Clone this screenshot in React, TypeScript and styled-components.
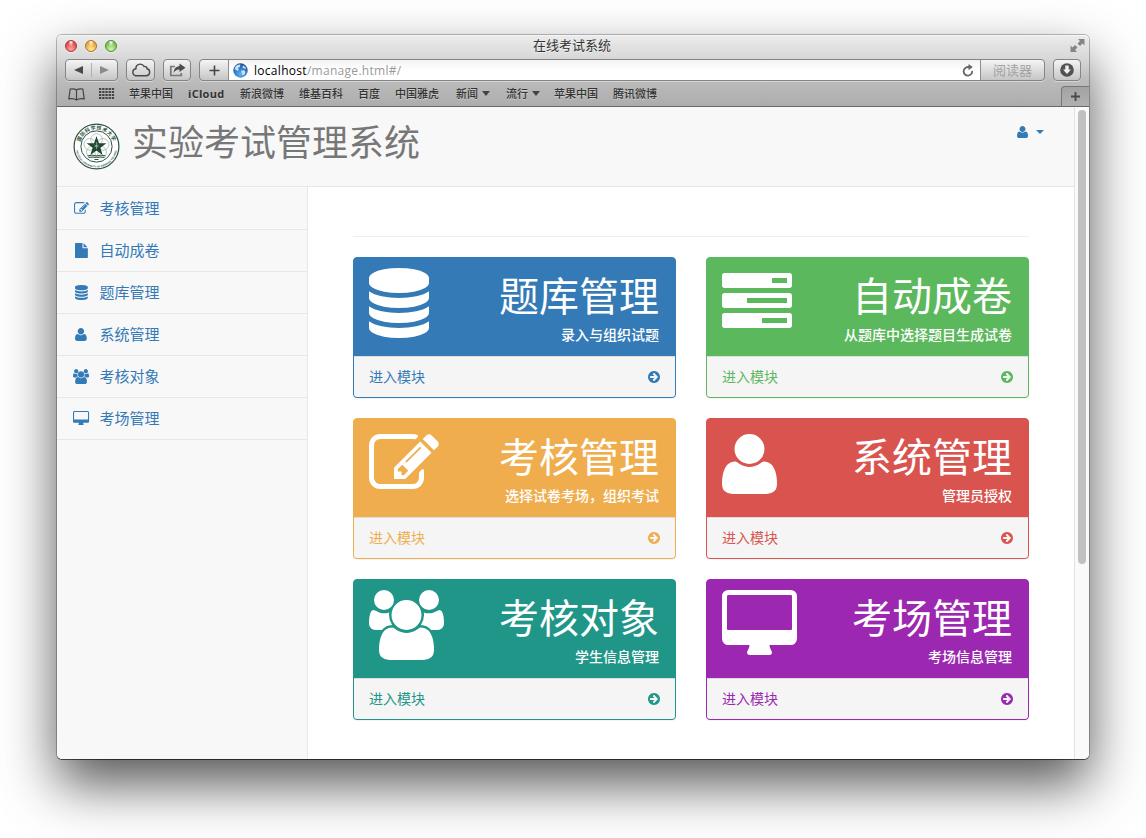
import React from 'react';
import styled, { createGlobalStyle } from 'styled-components';

const CJK = '"Noto Sans CJK SC", sans-serif';

const GlobalStyle = createGlobalStyle`
  * { box-sizing: border-box; }
  body {
    margin: 0;
    background: #fff;
    font-family: "Liberation Sans", ${CJK};
    font-size: 14px;
    line-height: 20px;
    overflow: hidden;
  }
`;

/* ---------- icons (1792 units per em, y axis pointing up) ---------- */

type Glyph = { w: number; d: string };

const glyphs: Record<string, Glyph> = {
  database: {
    w: 1536,
    d: 'M768 768q237 0 443 43t325 127v-170q0-69-103-128t-280-93.5t-385-34.5t-385 34.5t-280 93.5t-103 128v170q119-84 325-127t443-43zM768 0q237 0 443 43t325 127v-170q0-69-103-128t-280-93.5t-385-34.5t-385 34.5t-280 93.5t-103 128v170q119-84 325-127t443-43zM768 384q237 0 443 43t325 127v-170q0-69-103-128t-280-93.5t-385-34.5t-385 34.5t-280 93.5t-103 128v170q119-84 325-127t443-43zM768 1536q208 0 385-34.5t280-93.5t103-128v-128q0-69-103-128t-280-93.5t-385-34.5t-385 34.5t-280 93.5t-103 128v128q0 69 103 128t280 93.5t385 34.5z',
  },
  tasks: {
    w: 1792,
    d: 'M1024 128h640v128h-640v-128zM640 640h1024v128h-1024v-128zM1280 1152h384v128h-384v-128zM1792 320v-256q0-26-19-45t-45-19h-1664q-26 0-45 19t-19 45v256q0 26 19 45t45 19h1664q26 0 45-19t19-45zM1792 832v-256q0-26-19-45t-45-19h-1664q-26 0-45 19t-19 45v256q0 26 19 45t45 19h1664q26 0 45-19t19-45zM1792 1344v-256q0-26-19-45t-45-19h-1664q-26 0-45 19t-19 45v256q0 26 19 45t45 19h1664q26 0 45-19t19-45z',
  },
  edit: {
    w: 1792,
    d: 'M888 352l116 116l-152 152l-116-116v-56h96v-96h56zM1328 1072q-16 16-33-1l-350-350q-17-17-1-33t33 1l350 350q17 17 1 33zM1408 478v-190q0-119-84.5-203.5t-203.5-84.5h-832q-119 0-203.5 84.5t-84.5 203.5v832q0 119 84.5 203.5t203.5 84.5h832q63 0 117-25q15-7 18-23q3-17-9-29l-49-49q-14-14-32-8q-23 6-45 6h-832q-66 0-113-47t-47-113v-832q0-66 47-113t113-47h832q66 0 113 47t47 113v126q0 13 9 22l64 64q15 15 35 7t20-29zM1312 1216l288-288l-672-672h-288v288zM1756 1084l-92-92l-288 288l92 92q28 28 68 28t68-28l152-152q28-28 28-68t-28-68z',
  },
  user: {
    w: 1408,
    d: 'M1408 131q0-120-73-189.5t-194-69.5h-874q-121 0-194 69.5t-73 189.5q0 53 3.5 103.5t14 109t26.5 108.5t43 97.5t62 81t85.5 53.5t111.5 20q9 0 42-21.5t74.5-48t108-48t133.5-21.5t133.5 21.5t108 48t74.5 48t42 21.5q61 0 111.5-20t85.5-53.5t62-81t43-97.5t26.5-108.5t14-109t3.5-103.5zM1088 1024q0-159-112.5-271.5t-271.5-112.5t-271.5 112.5t-112.5 271.5t112.5 271.5t271.5 112.5t271.5-112.5t112.5-271.5z',
  },
  users: {
    w: 1920,
    d: 'M593 640q-162-5-265-128h-134q-82 0-138 40.5t-56 118.5q0 353 124 353q6 0 43.5-21t97.5-42.5t119-21.5q67 0 133 23q-5-37-5-66q0-139 81-256zM1664 3q0-120-73-189.5t-194-69.5h-874q-121 0-194 69.5t-73 189.5q0 53 3.5 103.5t14 109t26.5 108.5t43 97.5t62 81t85.5 53.5t111.5 20q10 0 43-21.5t73-48t107-48t135-21.5t135 21.5t107 48t73 48t43 21.5q61 0 111.5-20t85.5-53.5t62-81t43-97.5t26.5-108.5t14-109t3.5-103.5zM640 1280q0-106-75-181t-181-75t-181 75t-75 181t75 181t181 75t181-75t75-181zM1344 896q0-159-112.5-271.5t-271.5-112.5t-271.5 112.5t-112.5 271.5t112.5 271.5t271.5 112.5t271.5-112.5t112.5-271.5zM1920 671q0-78-56-118.5t-138-40.5h-134q-103 123-265 128q81 117 81 256q0 29-5 66q66-23 133-23q59 0 119 21.5t97.5 42.5t43.5 21q124 0 124-353zM1792 1280q0-106-75-181t-181-75t-181 75t-75 181t75 181t181 75t181-75t75-181z',
  },
  desktop: {
    w: 1920,
    d: 'M1792 544v832q0 13-9.5 22.5t-22.5 9.5h-1600q-13 0-22.5-9.5t-9.5-22.5v-832q0-13 9.5-22.5t22.5-9.5h1600q13 0 22.5 9.5t9.5 22.5zM1920 1376v-1088q0-66-47-113t-113-47h-544q0-37 16-77.5t32-71t16-43.5q0-26-19-45t-45-19h-512q-26 0-45 19t-19 45q0 14 16 44t32 70t16 78h-544q-66 0-113 47t-47 113v1088q0 66 47 113t113 47h1600q66 0 113-47t47-113z',
  },
  file: {
    w: 1536,
    d: 'M1024 1024v472q22-14 36-28l408-408q14-14 28-36h-472zM896 992q0-40 28-68t68-28h544v-1056q0-40-28-68t-68-28h-1344q-40 0-68 28t-28 68v1600q0 40 28 68t68 28h800v-544z',
  },
  arrow: {
    w: 1536,
    d: 'M1285 640q0 27-18 45l-91 91l-362 362q-18 18-45 18t-45-18l-91-91q-18-18-18-45t18-45l189-189h-502q-26 0-45-19t-19-45v-128q0-26 19-45t45-19h502l-189-189q-19-19-19-45t19-45l91-91q18-18 45-18t45 18l362 362l91 91q18 18 18 45zM1536 640q0-209-103-385.5t-279.5-279.5t-385.5-103t-385.5 103t-279.5 279.5t-103 385.5t103 385.5t279.5 279.5t385.5 103t385.5-103t279.5-279.5t103-385.5z',
  },
};

const Svg = styled.svg`
  display: block;
  flex: none;
  overflow: visible;
`;

const Icon = ({ name, size }: { name: string; size: number }) => {
  const g = glyphs[name];
  return (
    <Svg width={(g.w / 1792) * size} height={size} viewBox={`0 -1536 ${g.w} 1792`}>
      <path transform="scale(1 -1)" fill="currentColor" fillRule="evenodd" d={g.d} />
    </Svg>
  );
};

/* ---------- browser window ---------- */

const Desktop = styled.div`
  width: 1146px;
  height: 838px;
  padding: 35px 57px 79px 57px;
  overflow: hidden;
`;

const Window = styled.div`
  width: 1032px;
  height: 724px;
  border-radius: 5px;
  display: flex;
  flex-direction: column;
  background: #fff;
  box-shadow: 0 0 0 1px rgba(0, 0, 0, 0.25), 0 1px 0 0 rgba(0, 0, 0, 0.5), 0 25px 54px rgba(0, 0, 0, 0.67);
`;

const Chrome = styled.div`
  height: 72px;
  flex: none;
  border-radius: 5px 5px 0 0;
  border-bottom: 1px solid #686868;
  background: linear-gradient(#ececec 0, #d9d9d9 22px, #bbb 46px, #adadad 71px);
  box-shadow: inset 0 1px 0 #f6f6f6;
  font-family: "Open Sans", ${CJK};
  color: #333;
`;

const TitleBar = styled.div`
  height: 24px;
  display: grid;
  grid-template-columns: 80px 1fr 80px;
  align-items: center;
  padding: 0 4px 2px 8px;
`;

const Lights = styled.div`
  display: flex;
  gap: 8px;
`;

const Light = styled.span<{ $edge: string; $mid: string; $glow: string }>`
  width: 12px;
  height: 12px;
  border-radius: 50%;
  border: 1px solid ${(p) => p.$edge};
  background: radial-gradient(ellipse at 50% 10%, #fff 0, rgba(255, 255, 255, 0) 38%),
    radial-gradient(circle at 50% 85%, ${(p) => p.$glow} 0, ${(p) => p.$mid} 70%);
  box-shadow: 0 1px 0 rgba(255, 255, 255, 0.5);
`;

const WindowTitle = styled.div`
  text-align: center;
  padding: 0 6px 1px 0;
  font-size: 13px;
  line-height: 19px;
  color: #333;
  text-shadow: 0 1px 0 rgba(255, 255, 255, 0.5);
`;

const Expand = styled.div`
  display: flex;
  justify-content: flex-end;
`;

const Toolbar = styled.div`
  height: 23px;
  display: flex;
  gap: 8px;
  padding: 0 8px;
`;

const ToolButton = styled.div<{ $w: number }>`
  width: ${(p) => p.$w}px;
  height: 22px;
  display: flex;
  align-items: center;
  justify-content: center;
  border: 1px solid #858585;
  border-radius: 4px;
  background: linear-gradient(#f4f4f4, #c6c6c6);
  box-shadow: 0 1px 0 rgba(255, 255, 255, 0.4);
`;

const NavHalf = styled.span<{ $divided?: boolean }>`
  flex: 1;
  height: 14px;
  display: flex;
  align-items: center;
  justify-content: center;
  border-right: ${(p) => (p.$divided ? '1px solid #b0b0b0' : '0')};
`;

const AddressGroup = styled.div`
  flex: 1;
  height: 22px;
  display: flex;
  border: 1px solid #858585;
  border-radius: 4px;
  overflow: hidden;
  background: linear-gradient(#f4f4f4, #c6c6c6);
  box-shadow: 0 1px 0 rgba(255, 255, 255, 0.4);
`;

const GroupButton = styled.div<{ $w: number }>`
  width: ${(p) => p.$w}px;
  display: flex;
  align-items: center;
  justify-content: center;
  font-size: 13px;
  color: #a3a3a3;
`;

const Address = styled.div`
  flex: 1;
  display: flex;
  align-items: center;
  padding: 0 6px 0 4px;
  border: solid #8d8d8d;
  border-width: 0 1px;
  background: linear-gradient(#f3f3f3, #fff 50%);
`;

const Url = styled.div`
  flex: 1;
  margin-left: 6px;
  padding-top: 2px;
  font-family: "Open Sans", sans-serif;
  font-size: 12px;
  letter-spacing: 0.29px;
  line-height: 20px;
  color: #9a9a9a;
`;

const Host = styled.span`
  color: #000;
`;

const Bookmarks = styled.div`
  height: 24px;
  display: flex;
  align-items: center;
  padding: 0 0 0 11px;
  font-size: 11px;
  font-weight: 500;
  line-height: 20px;
  color: #333;
  text-shadow: 0 1px 0 rgba(255, 255, 255, 0.35);
`;

const BookmarkIcons = styled.div`
  width: 61px;
  display: flex;
  align-items: center;
  gap: 14px;
`;

const Bookmark = styled.span<{ $after?: number; $bold?: boolean }>`
  display: flex;
  align-items: center;
  gap: 4px;
  white-space: nowrap;
  min-width: ${(p) => (p.$bold ? '37px' : '0')};
  margin-right: ${(p) => p.$after ?? 15}px;
  letter-spacing: ${(p) => (p.$bold ? '0.3px' : '0')};
  font-weight: ${(p) => (p.$bold ? 700 : 500)};
`;

const Caret = styled.span<{ $s: number }>`
  border: ${(p) => p.$s}px solid transparent;
  border-top-color: currentColor;
  border-bottom-width: 0;
`;

const MenuMark = styled.span`
  margin-top: -2px;
  border: solid transparent;
  border-width: 5px 4px 0 4px;
  border-top-color: #444;
`;

const NewTab = styled.div`
  margin-left: auto;
  align-self: flex-end;
  width: 28px;
  height: 20px;
  display: flex;
  align-items: center;
  justify-content: center;
  border: solid #777;
  border-width: 1px 0 0 1px;
  border-radius: 4px 0 0 0;
  background: linear-gradient(#a3a3a3, #b0b0b0);
`;

/* ---------- page ---------- */

const Viewport = styled.div`
  flex: 1;
  display: flex;
  border-radius: 0 0 5px 5px;
  overflow: hidden;
`;

const Page = styled.div`
  flex: 1;
  display: flex;
  flex-direction: column;
`;

const ScrollTrack = styled.div`
  width: 15px;
  padding: 3px 3px 0 3px;
  border-left: 1px solid #e3e3e3;
  background: #fafafa;
`;

const ScrollThumb = styled.div`
  width: 8px;
  height: 454px;
  border-radius: 4px;
  background: #c1c1c1;
`;

const Header = styled.header`
  height: 80px;
  display: flex;
  padding: 16px 30px 0 16px;
  background: #f8f8f8;
  border-bottom: 1px solid #e7e7e7;
`;

const Brand = styled.h1`
  flex: 1;
  margin: -9px 0 0 11px;
  font: 400 36px/52px ${CJK};
  color: #777;
`;

const Account = styled.div`
  display: flex;
  gap: 8px;
  height: 18px;
  align-items: center;
  color: #337ab7;
`;

const Body = styled.div`
  flex: 1;
  display: flex;
`;

const Sidebar = styled.nav`
  width: 251px;
  padding-top: 1px;
  background: #f8f8f8;
  border-right: 1px solid #e7e7e7;
`;

const NavItem = styled.a`
  display: flex;
  align-items: center;
  gap: 8.5px;
  height: 42px;
  padding-left: 14px;
  border-bottom: 1px solid #e7e7e7;
  font: 400 15px/20px ${CJK};
  color: #337ab7;
`;

const NavLabel = styled.span`
  padding-bottom: 2px;
`;

const FixedIcon = styled.span`
  width: 20px;
  display: flex;
  justify-content: center;
`;

const Content = styled.main`
  flex: 1;
  padding: 49px 45px 0 45px;
`;

const Grid = styled.div`
  display: grid;
  grid-template-columns: 1fr 1fr;
  gap: 20px 30px;
  padding-top: 20px;
  border-top: 1px solid #eee;
`;

const Panel = styled.section<{ $color: string }>`
  height: 141px;
  border: 1px solid ${(p) => p.$color};
  border-radius: 4px;
  overflow: hidden;
  background: ${(p) => p.$color};
  color: ${(p) => p.$color};
  box-shadow: 0 1px 1px rgba(0, 0, 0, 0.05);
`;

const PanelHeading = styled.div`
  height: 98px;
  display: flex;
  justify-content: space-between;
  padding: 10px 16px 10px 15px;
  color: #fff;
`;

const PanelText = styled.div`
  text-align: right;
  font-family: ${CJK};
`;

const PanelTitle = styled.div`
  height: 56px;
  font-size: 40px;
  line-height: 52px;
`;

const PanelNote = styled.div`
  font-size: 14px;
  font-weight: 500;
  line-height: 20px;
`;

const PanelFooter = styled.a`
  display: flex;
  align-items: center;
  justify-content: space-between;
  height: 41px;
  padding: 0 15px;
  border-top: 1px solid #ddd;
  background: #f5f5f5;
  font: 400 14px/20px ${CJK};
`;

const FooterLabel = styled.span`
  padding-bottom: 2px;
`;

const navItems = [
  { icon: 'edit', label: '考核管理' },
  { icon: 'file', label: '自动成卷' },
  { icon: 'database', label: '题库管理' },
  { icon: 'user', label: '系统管理' },
  { icon: 'users', label: '考核对象' },
  { icon: 'desktop', label: '考场管理' },
];

const panels = [
  { icon: 'database', color: '#337ab7', title: '题库管理', note: '录入与组织试题' },
  { icon: 'tasks', color: '#5cb85c', title: '自动成卷', note: '从题库中选择题目生成试卷' },
  { icon: 'edit', color: '#f0ad4e', title: '考核管理', note: '选择试卷考场，组织考试' },
  { icon: 'user', color: '#d9534f', title: '系统管理', note: '管理员授权' },
  { icon: 'users', color: '#209688', title: '考核对象', note: '学生信息管理' },
  { icon: 'desktop', color: '#9c27b0', title: '考场管理', note: '考场信息管理' },
];

const bookmarks: { label: string; after?: number; menu?: boolean; bold?: boolean }[] = [
  { label: '苹果中国' },
  { label: 'iCloud', bold: true },
  { label: '新浪微博' },
  { label: '维基百科' },
  { label: '百度' },
  { label: '中国雅虎', after: 17 },
  { label: '新闻', menu: true, after: 16 },
  { label: '流行', menu: true, after: 14 },
  { label: '苹果中国' },
  { label: '腾讯微博' },
];

const Seal = () => (
  <Svg width="48" height="48" viewBox="0.5 0.5 48 48">
    <defs>
      <path id="seal-top" d="M7.500 20A17 17 0 0 1 40.500 20" />
      <path id="seal-bottom" d="M3.700 28A20.600 20.600 0 0 0 44.300 28" />
    </defs>
    <circle cx="24" cy="24" r="22.4" fill="#fff" stroke="#2c5340" strokeWidth="1.2" />
    <circle cx="24" cy="24" r="15.6" fill="#fff" stroke="#2c5340" strokeWidth="1" />
    <g fill="none" stroke="#9fb3a7" strokeWidth="0.7">
      {[0, 72, 144, 216, 288].map((a) => (
        <circle key={a} cx="24" cy="17" r="5.8" transform={`rotate(${a} 24 24)`} />
      ))}
    </g>
    <path
      d="M24 13.6L26.4 20.7L33.9 20.8L27.9 25.3L30.1 32.4L24 28.1L17.9 32.4L20.1 25.3L14.1 20.8L21.6 20.7Z"
      fill="#1f4731"
    />
    <path d="M24 19.5v7M22 22.5l4 2M26 22.5l-4 2" stroke="#b8c8be" strokeWidth="0.6" />
    <path d="M15 33.4q4.500-1.500 9 0q4.500-1.500 9 0M16 35q4-1.200 8 0q4-1.200 8 0" fill="none" stroke="#2c5340" strokeWidth="1" />
    <path d="M22 37h4" stroke="#2c5340" strokeWidth="1" />
    <text fontFamily="Noto Sans CJK SC" fontSize="5" fontWeight="700" fill="#2c5340" letterSpacing="0.45">
      <textPath href="#seal-top" startOffset="0.5">国防科学技术大学</textPath>
    </text>
    <text fontFamily="Liberation Sans" fontSize="2.5" fontWeight="700" fill="#2c5340">
      <textPath href="#seal-bottom" startOffset="0">NATIONAL UNIVERSITY OF DEFENSE TECHNOLOGY</textPath>
    </text>
  </Svg>
);

const BrowserChrome = () => (
  <Chrome>
    <TitleBar>
      <Lights>
        <Light $edge="#a5393a" $mid="#e2474b" $glow="#ffa6a0" />
        <Light $edge="#a8732c" $mid="#eda33b" $glow="#ffec9a" />
        <Light $edge="#4f8a36" $mid="#78bf56" $glow="#d3f7a5" />
      </Lights>
      <WindowTitle>在线考试系统</WindowTitle>
      <Expand>
        <Svg width="15" height="15" viewBox="0 1 15 15" fill="#858585">
          <path d="M8 1h6.500v6.500l-2-2l-2.500 2.500l-2.500-2.500l2.500-2.500z" />
          <path d="M7 14H.5V7.500l2 2L5 7l2.500 2.500L5 12z" />
        </Svg>
      </Expand>
    </TitleBar>
    <Toolbar>
      <ToolButton $w={53}>
        <NavHalf $divided>
          <Svg width="9" height="8" viewBox="0 0 9 8"><path d="M0 4L9 0v8z" fill="#4a4a4a" /></Svg>
        </NavHalf>
        <NavHalf>
          <Svg width="9" height="8" viewBox="0 0 9 8"><path d="M9 4L0 0v8z" fill="#8b8b8b" /></Svg>
        </NavHalf>
      </ToolButton>
      <ToolButton $w={29}>
        <Svg width="20" height="14" viewBox="0 0 20 14">
          <path
            d="M4.600 12.700h10.600a3.500 3.500 0 0 0 .8-6.900a2.300 2.300 0 0 0-3-2.300a4.300 4.300 0 0 0-8.100 2.300a3.500 3.500 0 0 0-.3 6.900z"
            fill="none"
            stroke="#484848"
            strokeWidth="1.400"
          />
        </Svg>
      </ToolButton>
      <ToolButton $w={28}>
        <Svg width="17" height="14" viewBox="0 0 17 14">
          <path d="M6 3.500H1.800v9h10.500V10" fill="none" stroke="#777" strokeWidth="1.700" />
          <path d="M10.500 0.500L16.500 4.800L10.500 9V6.500Q6.500 6.300 4.500 10Q5 3.500 10.500 3z" fill="#4d4d4d" />
        </Svg>
      </ToolButton>
      <AddressGroup>
        <GroupButton $w={28}>
          <Svg width="11" height="11" viewBox="0 0 11 11"><path d="M5.500 0.500v10M.5 5.500h10" stroke="#444" strokeWidth="1.600" /></Svg>
        </GroupButton>
        <Address>
          <Svg width="15" height="15" viewBox="0 0 15 15">
            <defs>
              <radialGradient id="globe" cx="50%" cy="75%" r="75%">
                <stop offset="0" stopColor="#58b4f5" />
                <stop offset="1" stopColor="#174a9c" />
              </radialGradient>
            </defs>
            <circle cx="7.500" cy="7.500" r="7.200" fill="url(#globe)" />
            <path d="M2.500 3.500Q5 1 7.500 1.800L6.800 4L5 5L5.800 7L4 8L2.800 6.500L1.500 6.500zM8 8l3-1l1.500 2l-1 2.500l-2 1L9 11zM10 2.500l2.300 1.500l.7 2l-1.800-.5l-1.800-1z" fill="#c3e2f8" />
          </Svg>
          <Url><Host>localhost</Host>/manage.html#/</Url>
          <Svg width="12" height="13" viewBox="0 0 12 13">
            <path d="M10.200 6.800A4.300 4.300 0 1 1 6 3h2" fill="none" stroke="#666" strokeWidth="1.800" />
            <path d="M6.500 0L10.800 3L6.500 6.200z" fill="#666" />
          </Svg>
        </Address>
        <GroupButton $w={63}>阅读器</GroupButton>
      </AddressGroup>
      <ToolButton $w={28}>
        <Svg width="14" height="14" viewBox="0 0 14 14">
          <circle cx="7" cy="7" r="6.800" fill="#515151" />
          <path d="M5.300 2.500h3.400v4h2.300L7 11L3 6.500h2.300z" fill="#f0f0f0" />
        </Svg>
      </ToolButton>
    </Toolbar>
    <Bookmarks>
      <BookmarkIcons>
        <Svg width="17" height="13" viewBox="0 0 17 13" fill="none" stroke="#444" strokeWidth="1.200">
          <path d="M8.500 2Q6.500.3 2.200 1L.8 10.800Q6 10 8.500 12Q11 10 16.200 10.800L14.800 1Q10.500.3 8.500 2zM8.500 2v10" />
        </Svg>
        <Svg width="16" height="12" viewBox="0 0 16 12" fill="#444">
          {[0, 3, 6, 9].map((y) =>
            [0, 3.2, 6.4, 9.6, 12.8].map((x) => <rect key={`${x}-${y}`} x={x} y={y} width="2.300" height="2" />)
          )}
        </Svg>
      </BookmarkIcons>
      {bookmarks.map((b, i) => (
        <Bookmark key={i} $after={b.after} $bold={b.bold}>
          {b.label}
          {b.menu && <MenuMark />}
        </Bookmark>
      ))}
      <NewTab>
        <Svg width="9" height="9" viewBox="0 0 9 9"><path d="M4.500 0v9M0 4.500h9" stroke="#4a4a4a" strokeWidth="1.800" /></Svg>
      </NewTab>
    </Bookmarks>
  </Chrome>
);

export default function App() {
  return (
    <Desktop>
      <GlobalStyle />
      <Window>
        <BrowserChrome />
        <Viewport>
          <Page>
            <Header>
              <Seal />
              <Brand>实验考试管理系统</Brand>
              <Account>
                <Icon name="user" size={14} />
                <Caret $s={4} />
              </Account>
            </Header>
            <Body>
              <Sidebar>
                {navItems.map((n) => (
                  <NavItem key={n.label}>
                    <FixedIcon><Icon name={n.icon} size={15} /></FixedIcon>
                    <NavLabel>{n.label}</NavLabel>
                  </NavItem>
                ))}
              </Sidebar>
              <Content>
                <Grid>
                  {panels.map((p) => (
                    <Panel key={p.title} $color={p.color}>
                      <PanelHeading>
                        <Icon name={p.icon} size={70} />
                        <PanelText>
                          <PanelTitle>{p.title}</PanelTitle>
                          <PanelNote>{p.note}</PanelNote>
                        </PanelText>
                      </PanelHeading>
                      <PanelFooter>
                        <FooterLabel>进入模块</FooterLabel>
                        <Icon name="arrow" size={14} />
                      </PanelFooter>
                    </Panel>
                  ))}
                </Grid>
              </Content>
            </Body>
          </Page>
          <ScrollTrack>
            <ScrollThumb />
          </ScrollTrack>
        </Viewport>
      </Window>
    </Desktop>
  );
}
